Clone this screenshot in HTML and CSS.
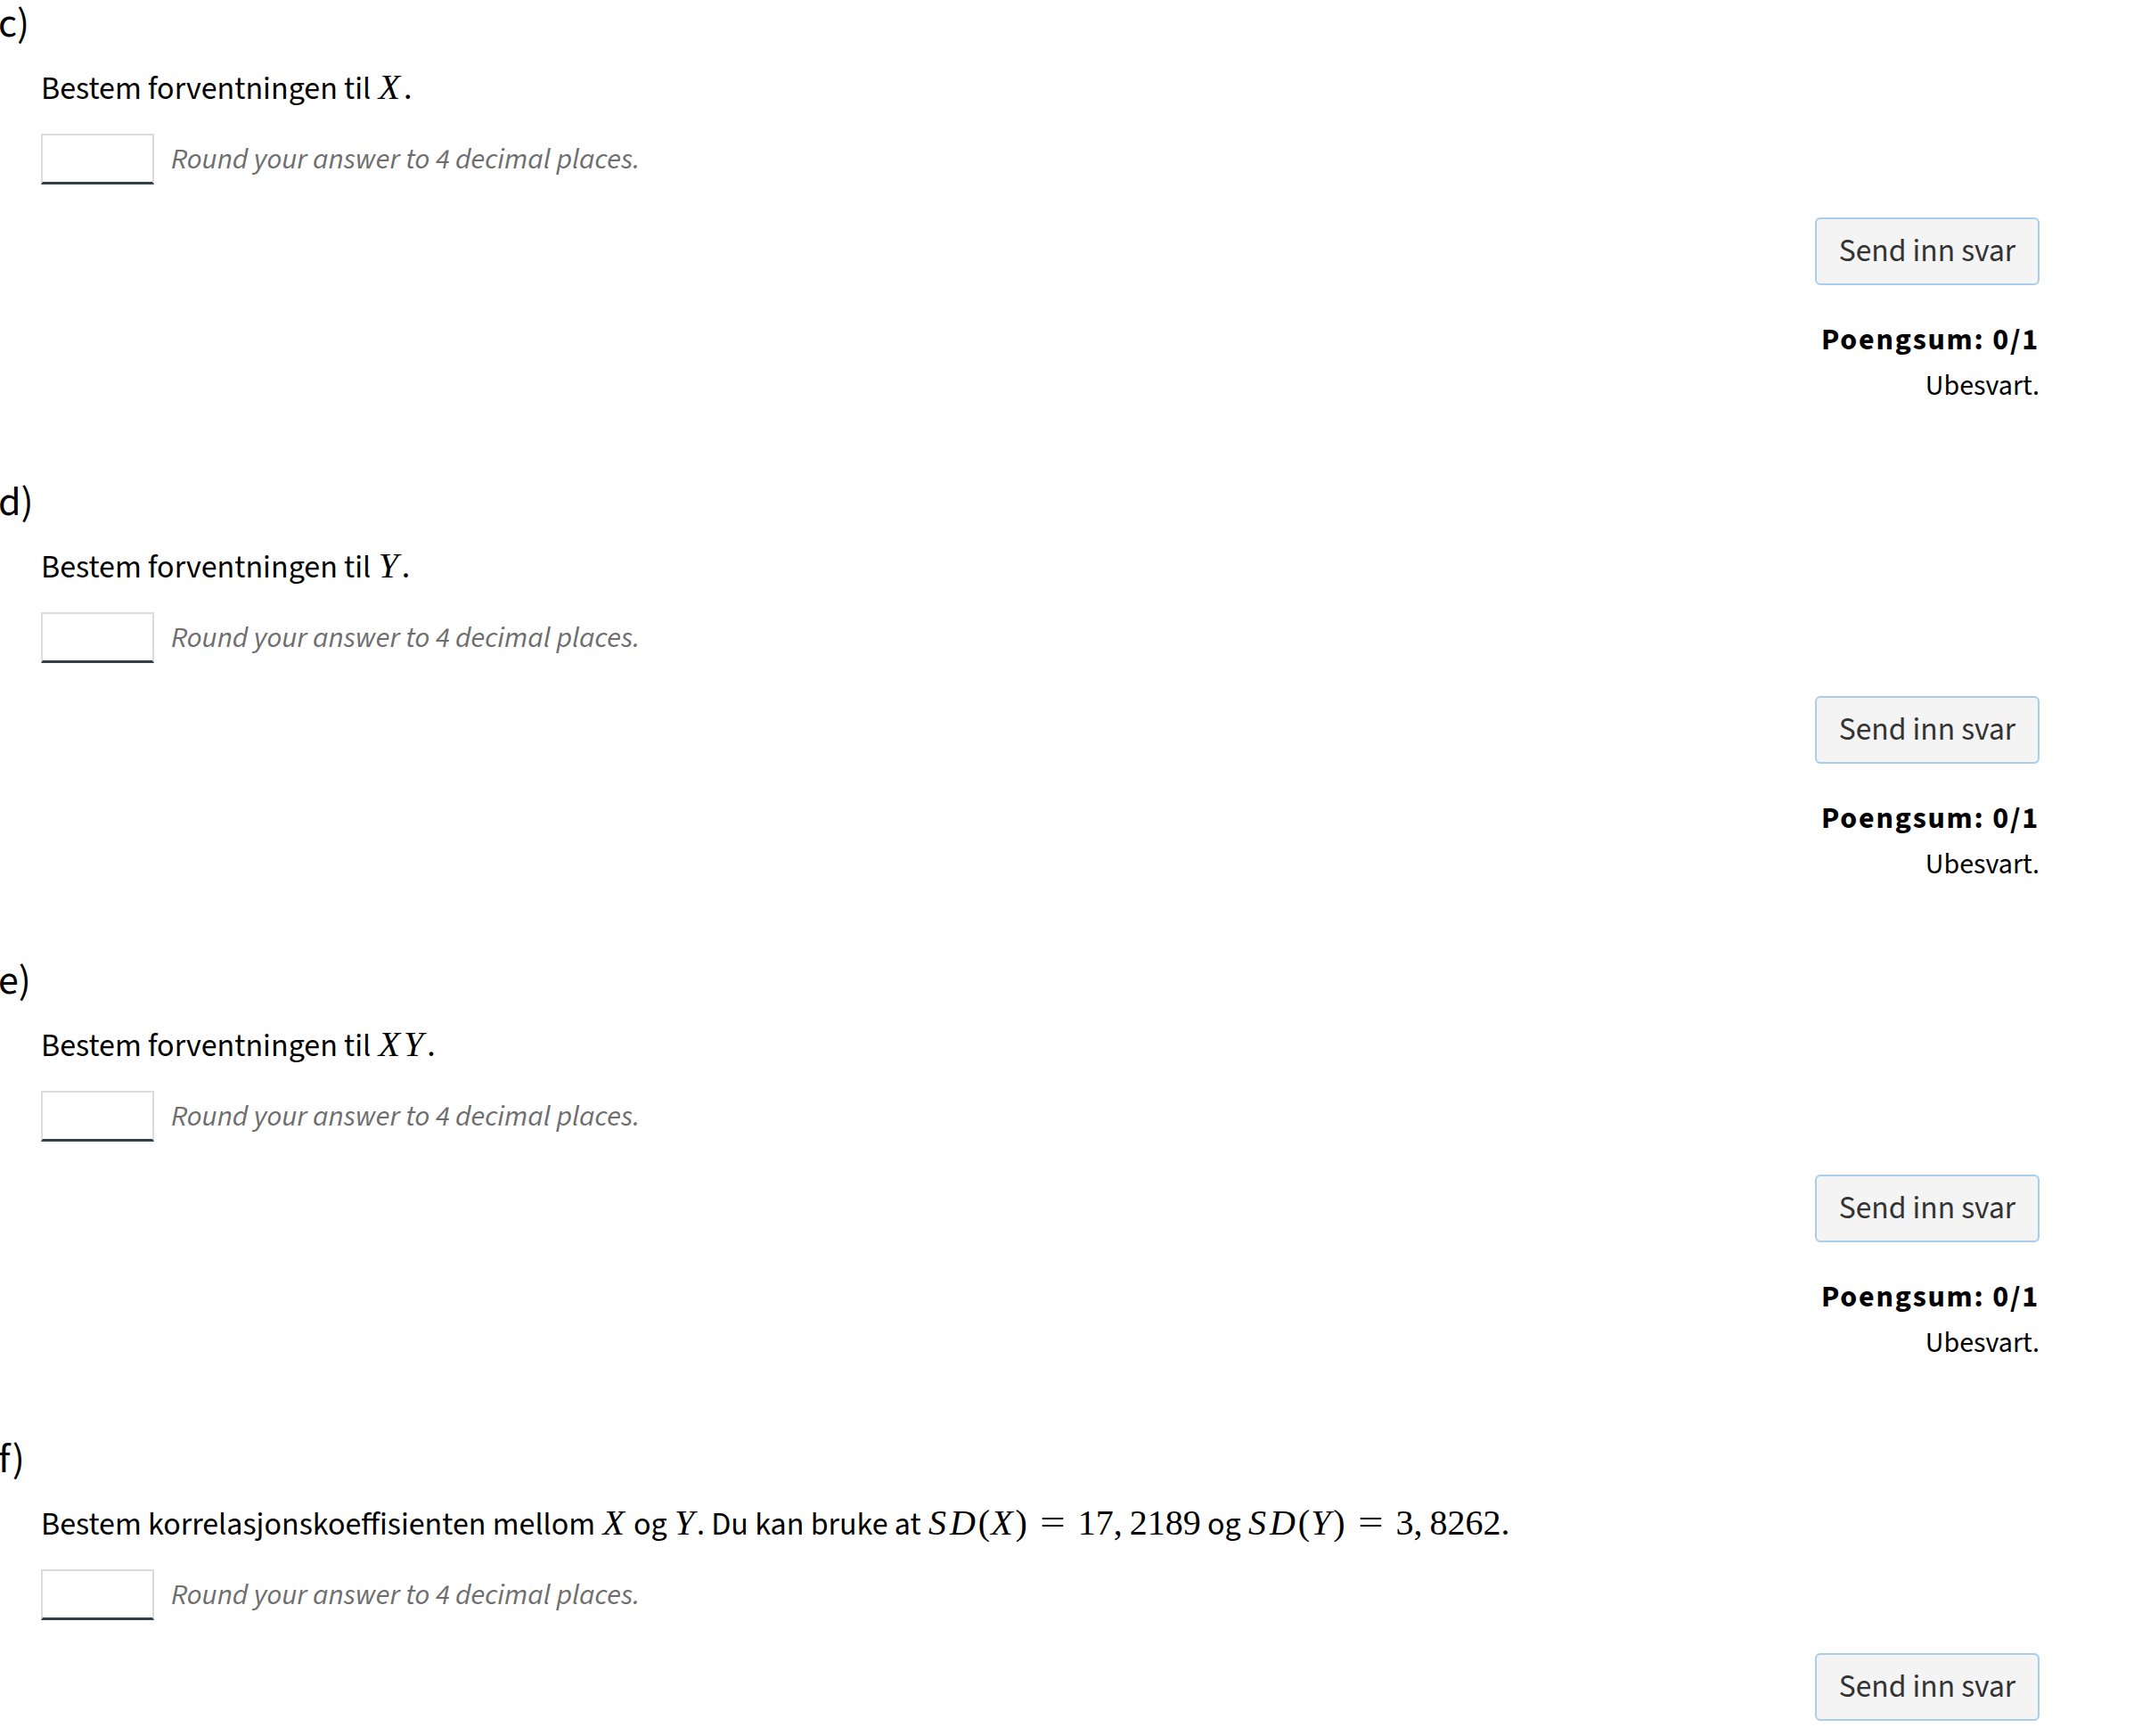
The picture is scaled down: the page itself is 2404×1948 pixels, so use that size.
FILE: index.html
```html
<!DOCTYPE html>
<html lang="no">
<head>
<meta charset="utf-8">
<title>Oppgave</title>
<link rel="stylesheet" href="styles.css">
</head>
<body>
<main class="page">

  <section class="part">
    <div class="part-label">c)</div>
    <div class="part-body">
      <p class="prompt">Bestem forventningen til <span class="math"><i>X</i><span class="punct">.</span></span></p>
      <div class="answer-row">
        <input class="answer-box" type="text" aria-label="Svar c">
        <span class="hint">Round your answer to 4 decimal places.</span>
      </div>
      <div class="actions"><button class="submit" type="button">Send inn svar</button></div>
      <div class="score">
        <div class="score-title">Poengsum: 0/1</div>
        <div class="score-status">Ubesvart.</div>
      </div>
    </div>
  </section>

  <section class="part">
    <div class="part-label">d)</div>
    <div class="part-body">
      <p class="prompt">Bestem forventningen til <span class="math"><i>Y</i><span class="punct">.</span></span></p>
      <div class="answer-row">
        <input class="answer-box" type="text" aria-label="Svar d">
        <span class="hint">Round your answer to 4 decimal places.</span>
      </div>
      <div class="actions"><button class="submit" type="button">Send inn svar</button></div>
      <div class="score">
        <div class="score-title">Poengsum: 0/1</div>
        <div class="score-status">Ubesvart.</div>
      </div>
    </div>
  </section>

  <section class="part">
    <div class="part-label">e)</div>
    <div class="part-body">
      <p class="prompt">Bestem forventningen til <span class="math"><i>X</i><i>Y</i><span class="punct">.</span></span></p>
      <div class="answer-row">
        <input class="answer-box" type="text" aria-label="Svar e">
        <span class="hint">Round your answer to 4 decimal places.</span>
      </div>
      <div class="actions"><button class="submit" type="button">Send inn svar</button></div>
      <div class="score">
        <div class="score-title">Poengsum: 0/1</div>
        <div class="score-status">Ubesvart.</div>
      </div>
    </div>
  </section>

  <section class="part">
    <div class="part-label">f)</div>
    <div class="part-body">
      <p class="prompt">Bestem korrelasjonskoeffisienten mellom <span class="math"><i>X</i></span> og <span class="math"><i>Y</i></span>. Du kan bruke at <span class="math"><i>S</i><i>D</i>(<i>X</i>)<span class="rel">=</span>17,<span class="thin"></span>2189</span> og <span class="math"><i>S</i><i>D</i>(<i>Y</i>)<span class="rel">=</span>3,<span class="thin"></span>8262.</span></p>
      <div class="answer-row">
        <input class="answer-box" type="text" aria-label="Svar f">
        <span class="hint">Round your answer to 4 decimal places.</span>
      </div>
      <div class="actions"><button class="submit" type="button">Send inn svar</button></div>
      <div class="score">
        <div class="score-title">Poengsum: 0/1</div>
        <div class="score-status">Ubesvart.</div>
      </div>
    </div>
  </section>

</main>
</body>
</html>
```
FILE: styles.css
```css
html, body {
  margin: 0;
  padding: 0;
  background: #ffffff;
}

body {
  font-family: "Source Sans 3", "Source Sans Pro", "Liberation Sans", sans-serif;
  font-size: 36px;
  color: #000000;
}

.page {
  padding: 0 115px 0 0;
}

.part {
  display: flex;
  flex-direction: column;
  margin-bottom: 78px;
}

.part-label {
  font-size: 46px;
  line-height: 54px;
  margin-left: -2px;
}

.part-body {
  display: flex;
  flex-direction: column;
  padding-left: 46px;
}

.prompt {
  margin: 17px 0 0 0;
  line-height: 54px;
}

.math {
  font-family: "Liberation Serif", "Times New Roman", serif;
  font-size: 40px;
  white-space: nowrap;
}

.math i {
  font-style: italic;
  display: inline-block;
  padding: 0 0.07em 0 0.03em;
}

.math .punct {
  margin-left: 0.02em;
}

.math .rel {
  display: inline-block;
  margin: 0 0.43em 0 0.43em;
  transform: scaleX(1.25);
}

.math .thin {
  display: inline-block;
  width: 0.2em;
}

.answer-row {
  display: flex;
  align-items: center;
  gap: 19px;
  margin-top: 23px;
}

.answer-box {
  box-sizing: border-box;
  width: 127px;
  height: 57px;
  margin: 0;
  padding: 0 8px;
  border: 2px solid #dcdcdc;
  border-bottom: 3px solid #34404b;
  border-radius: 0;
  background: #ffffff;
  font: inherit;
}

.hint {
  font-size: 32.7px;
  font-style: italic;
  color: #6e6e6e;
}

.actions {
  display: flex;
  justify-content: flex-end;
  margin-top: 37px;
}

.submit {
  box-sizing: border-box;
  width: 252px;
  height: 76px;
  padding: 0;
  border: 2px solid #a9cdea;
  border-radius: 6px;
  background: #f4f4f4;
  color: #333333;
  font-family: inherit;
  font-size: 35.5px;
  cursor: pointer;
}

.score {
  display: flex;
  flex-direction: column;
  align-items: flex-end;
  margin-top: 37px;
}

.score-title {
  font-size: 34px;
  font-weight: 700;
  letter-spacing: 1.8px;
  line-height: 50px;
}

.score-status {
  font-size: 32px;
  line-height: 52px;
}
```
